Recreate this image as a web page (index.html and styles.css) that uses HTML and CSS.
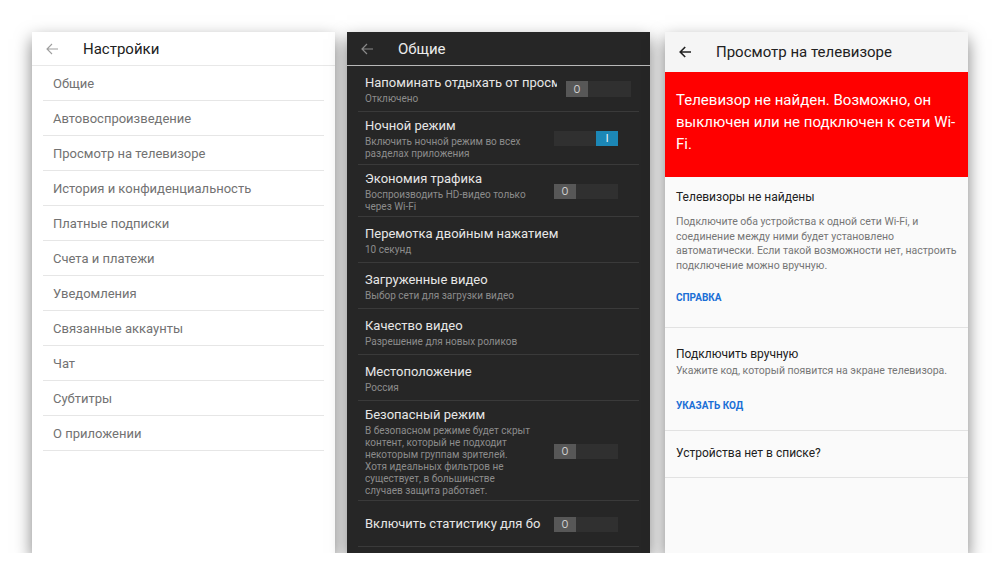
FILE: index.html
```html
<!DOCTYPE html>
<html lang="ru">
<head>
<meta charset="utf-8">
<title>Настройки</title>
<link rel="stylesheet" href="styles.css">
</head>
<body>
<div class="stage">
  <section class="panel panel-light">
    <header class="bar bar-light">
      <svg class="back" width="12" height="12" viewBox="0 0 12 12"><path d="M6 1 L1 6 L6 11 M1 6 H12" fill="none" stroke="#9e9e9e" stroke-width="1.1"/></svg>
      <h1 class="bar-title">Настройки</h1>
    </header>
    <ul class="menu">
      <li class="menu-item">Общие</li>
      <li class="menu-item">Автовоспроизведение</li>
      <li class="menu-item">Просмотр на телевизоре</li>
      <li class="menu-item">История и конфиденциальность</li>
      <li class="menu-item">Платные подписки</li>
      <li class="menu-item">Счета и платежи</li>
      <li class="menu-item">Уведомления</li>
      <li class="menu-item">Связанные аккаунты</li>
      <li class="menu-item">Чат</li>
      <li class="menu-item">Субтитры</li>
      <li class="menu-item">О приложении</li>
    </ul>
  </section>

  <section class="panel panel-dark">
    <header class="bar bar-dark">
      <svg class="back" width="12" height="12" viewBox="0 0 12 12"><path d="M6 1 L1 6 L6 11 M1 6 H12" fill="none" stroke="#8a8a8a" stroke-width="1.2"/></svg>
      <h1 class="bar-title">Общие</h1>
    </header>
    <ul class="settings">
      <li class="setting">
        <div class="setting-text setting-text-wide">
          <div class="setting-title">Напоминать отдыхать от просмо</div>
          <div class="setting-sub">Отключено</div>
        </div>
        <div class="switch switch-wide"><span class="knob">O</span></div>
      </li>
      <li class="setting">
        <div class="setting-text">
          <div class="setting-title">Ночной режим</div>
          <div class="setting-sub">Включить ночной режим во всех<br>разделах приложения</div>
        </div>
        <div class="switch switch-on"><span class="knob">I</span></div>
      </li>
      <li class="setting setting-short">
        <div class="setting-text">
          <div class="setting-title">Экономия трафика</div>
          <div class="setting-sub">Воспроизводить HD-видео только<br>через Wi-Fi</div>
        </div>
        <div class="switch"><span class="knob">O</span></div>
      </li>
      <li class="setting">
        <div class="setting-text setting-text-full">
          <div class="setting-title">Перемотка двойным нажатием</div>
          <div class="setting-sub">10 секунд</div>
        </div>
      </li>
      <li class="setting">
        <div class="setting-text setting-text-full">
          <div class="setting-title">Загруженные видео</div>
          <div class="setting-sub">Выбор сети для загрузки видео</div>
        </div>
      </li>
      <li class="setting">
        <div class="setting-text setting-text-full">
          <div class="setting-title">Качество видео</div>
          <div class="setting-sub">Разрешение для новых роликов</div>
        </div>
      </li>
      <li class="setting">
        <div class="setting-text setting-text-full">
          <div class="setting-title">Местоположение</div>
          <div class="setting-sub">Россия</div>
        </div>
      </li>
      <li class="setting setting-long">
        <div class="setting-text">
          <div class="setting-title">Безопасный режим</div>
          <div class="setting-sub">В безопасном режиме будет скрыт<br>контент, который не подходит<br>некоторым группам зрителей.<br>Хотя идеальных фильтров не<br>существует, в большинстве<br>случаев защита работает.</div>
        </div>
        <div class="switch"><span class="knob">O</span></div>
      </li>
      <li class="setting">
        <div class="setting-text">
          <div class="setting-title">Включить статистику для бо</div>
        </div>
        <div class="switch"><span class="knob">O</span></div>
      </li>
    </ul>
  </section>

  <section class="panel panel-tv">
    <header class="bar bar-tv">
      <svg class="back" width="12" height="12" viewBox="0 0 12 12"><path d="M6.2 1 L1.2 6 L6.2 11 M1.2 6 H12" fill="none" stroke="#212121" stroke-width="1.6"/></svg>
      <h1 class="bar-title">Просмотр на телевизоре</h1>
    </header>
    <div class="banner">Телевизор не найден. Возможно, он<br>выключен или не подключен к сети Wi-<br>Fi.</div>
    <div class="block block-first">
      <h2 class="block-title">Телевизоры не найдены</h2>
      <p class="block-text">Подключите оба устройства к одной сети Wi-Fi, и<br>соединение между ними будет установлено<br>автоматически. Если такой возможности нет, настроить<br>подключение можно вручную.</p>
      <a class="block-link link-help">СПРАВКА</a>
    </div>
    <div class="block block-second">
      <h2 class="block-title">Подключить вручную</h2>
      <p class="block-text block-text-tight">Укажите код, который появится на экране телевизора.</p>
      <a class="block-link link-code">УКАЗАТЬ КОД</a>
    </div>
    <div class="block block-third">
      <h2 class="block-title">Устройства нет в списке?</h2>
    </div>
  </section>
</div>
</body>
</html>
```

FILE: styles.css
```css
html, body {
  margin: 0;
  background: #ffffff;
  font-family: Roboto, "Noto Sans", "DejaVu Sans", sans-serif;
}

.stage {
  display: flex;
  align-items: flex-start;
  gap: 12px;
  padding: 32px 0 0 32px;
}

.panel {
  flex: 0 0 303px;
  width: 303px;
  height: 521px;
  overflow: hidden;
  box-shadow: 0 7px 16px rgba(0, 0, 0, 0.5);
}

/* ---------- header bars ---------- */
.bar {
  display: flex;
  align-items: center;
  box-sizing: border-box;
  padding-left: 14px;
}

.back {
  display: block;
  flex: 0 0 12px;
}

.bar-title {
  margin: 0 0 0 25px;
  font-size: 15px;
  font-weight: 400;
  line-height: 20px;
  white-space: nowrap;
}

/* ---------- left panel ---------- */
.panel-light {
  background: #ffffff;
}

.bar-light {
  height: 34px;
  border-bottom: 1px solid #e8e8e8;
}

.bar-light .bar-title {
  color: #212121;
}

.menu {
  list-style: none;
  margin: 0;
  padding: 0 11px;
}

.menu-item {
  display: flex;
  align-items: center;
  box-sizing: border-box;
  height: 35px;
  padding-left: 10px;
  border-bottom: 1px solid #e6e6e6;
  font-size: 13px;
  color: #727272;
  white-space: nowrap;
}

/* ---------- middle panel ---------- */
.panel-dark {
  background: #262626;
}

.bar-dark {
  height: 34px;
  border-bottom: 1px solid #b8b8b8;
}

.bar-dark .bar-title {
  color: #ececec;
}

.settings {
  list-style: none;
  margin: 0;
  padding: 0 11px;
}

.setting {
  display: flex;
  align-items: center;
  box-sizing: border-box;
  min-height: 46px;
  padding: 5px 0 4px 7px;
  border-bottom: 1px solid #3a3a3a;
}

.setting-short,
.setting-long {
  padding-bottom: 3px;
}

.setting-text {
  flex: 0 0 189px;
  width: 189px;
  overflow: hidden;
  white-space: nowrap;
}

.setting-text-wide {
  flex-basis: 192px;
  width: 192px;
}

.setting-text-full {
  flex: 1 1 auto;
  width: auto;
}

.setting-title {
  margin-bottom: 1px;
  font-size: 13px;
  line-height: 18px;
  color: #e6e6e6;
}

.setting-sub {
  font-size: 10px;
  line-height: 12px;
  color: #8c8c8c;
}

.switch {
  display: flex;
  width: 64px;
  height: 15px;
  background: #303030;
}

.switch-wide {
  width: 65px;
  height: 16px;
  margin-left: 9px;
}

.switch-on {
  justify-content: flex-end;
}

.knob {
  display: flex;
  align-items: center;
  justify-content: center;
  width: 22px;
  height: 100%;
  background: #575757;
  color: #cfcfcf;
  font-size: 10px;
}

.switch-on .knob {
  background: #1c87b6;
  color: #ffffff;
}

/* ---------- right panel ---------- */
.panel-tv {
  margin-left: 3px;
  background: #fafafa;
}

.bar-tv {
  height: 40px;
  background: #f5f5f5;
}

.bar-tv .bar-title {
  color: #212121;
}

.banner {
  box-sizing: border-box;
  height: 105px;
  padding: 17px 11px 0;
  background: #ff0000;
  color: #ffffff;
  font-size: 15px;
  line-height: 22px;
  white-space: nowrap;
}

.block {
  padding: 0 11px;
  border-bottom: 1px solid #e2e2e2;
}

.block-first {
  padding-top: 12px;
  padding-bottom: 22px;
}

.block-second {
  padding-top: 18px;
  padding-bottom: 17px;
}

.block-third {
  padding-top: 14px;
  padding-bottom: 16px;
}

.block-title {
  margin: 0;
  font-size: 12px;
  font-weight: 400;
  line-height: 16px;
  color: #212121;
  white-space: nowrap;
}

.block-text {
  margin: 10px 0 0;
  font-size: 10.5px;
  line-height: 14.5px;
  color: #767676;
  white-space: nowrap;
}

.block-text-tight {
  margin-top: 2px;
}

.block-link {
  display: block;
  font-size: 10px;
  font-weight: 700;
  line-height: 14px;
  color: #1a6fd6;
}

.link-help {
  margin-top: 18px;
}

.link-code {
  margin-top: 20px;
}
```
